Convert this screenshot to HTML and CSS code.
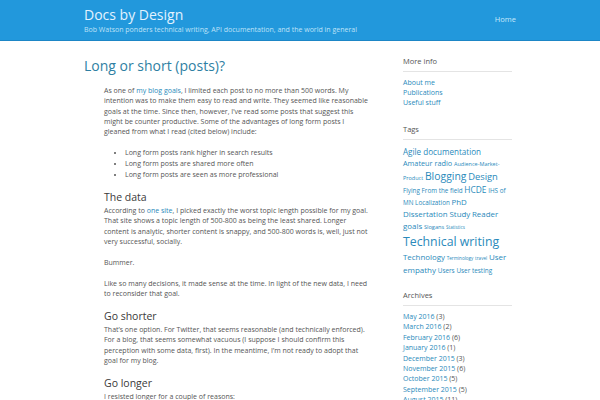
FILE: index.html
```html
<!DOCTYPE html>
<html>
<head>
<meta charset="utf-8">
<link rel="stylesheet" href="styles.css">
</head>
<body>
<header class="masthead">
  <div class="wrap head-inner">
    <div class="brand">
      <div class="site-title">Docs by Design</div>
      <div class="tagline">Bob Watson ponders technical writing, API documentation, and the world in general</div>
    </div>
    <nav class="nav"><a href="#">Home</a></nav>
  </div>
</header>
<div class="wrap page">
  <main class="main">
    <h1 class="entry-title">Long or short (posts)?</h1>
    <div class="entry">
      <p>As one of <a href="#">my blog goals</a>, I limited each post to no more than 500 words. My intention was to make them easy to read and write. They seemed like reasonable goals at the time. Since then, however, I’ve read some posts that suggest this might be counter productive. Some of the advantages of long form posts I gleaned from what I read (cited below) include:</p>
      <ul>
        <li>Long form posts rank higher in search results</li>
        <li>Long form posts are shared more often</li>
        <li>Long form posts are seen as more professional</li>
      </ul>
      <h2>The data</h2>
      <p>According to <a href="#">one site</a>, I picked exactly the worst topic length possible for my goal. That site shows a topic length of 500-800 as being the least shared. Longer content is analytic, shorter content is snappy, and 500-800 words is, well, just not very successful, socially.</p>
      <p>Bummer.</p>
      <p>Like so many decisions, it made sense at the time. In light of the new data, I need to reconsider that goal.</p>
      <h2>Go shorter</h2>
      <p>That’s one option. For Twitter, that seems reasonable (and technically enforced). For a blog, that seems somewhat vacuous (I suppose I should confirm this perception with some data, first). In the meantime, I’m not ready to adopt that goal for my blog.</p>
      <h2>Go longer</h2>
      <p>I resisted longer for a couple of reasons:</p>
    </div>
  </main>
  <aside class="sidebar">
    <section class="widget">
      <h3 class="widget-title">More info</h3>
      <ul class="links">
        <li><a href="#">About me</a></li>
        <li><a href="#">Publications</a></li>
        <li><a href="#">Useful stuff</a></li>
      </ul>
    </section>
    <section class="widget">
      <h3 class="widget-title">Tags</h3>
      <div class="tagcloud">
        <a class="s81" href="#">Agile documentation</a>
        <a class="s73" href="#">Amateur radio</a>
        <a class="s55" href="#">Audience-Market-Product</a>
        <a class="s104" href="#">Blogging</a>
        <a class="s94" href="#">Design</a>
        <a class="s63" href="#">Flying</a>
        <a class="s63" href="#">From the field</a>
        <a class="s84" href="#">HCDE</a>
        <a class="s63" href="#">IHS of MN</a>
        <a class="s63" href="#">Localization</a>
        <a class="s79" href="#">PhD Dissertation Study</a>
        <a class="s79" href="#">Reader goals</a>
        <a class="s57" href="#">Slogans</a>
        <a class="s46" href="#">Statistics</a>
        <a class="s123" href="#">Technical writing</a>
        <a class="s79" href="#">Technology</a>
        <a class="s46" href="#">Terminology</a>
        <a class="s46" href="#">travel</a>
        <a class="s80" href="#">User empathy</a>
        <a class="s64" href="#">Users</a>
        <a class="s64" href="#">User testing</a>
      </div>
    </section>
    <section class="widget">
      <h3 class="widget-title">Archives</h3>
      <ul class="links">
        <li><a href="#">May 2016</a> (3)</li>
        <li><a href="#">March 2016</a> (2)</li>
        <li><a href="#">February 2016</a> (6)</li>
        <li><a href="#">January 2016</a> (1)</li>
        <li><a href="#">December 2015</a> (3)</li>
        <li><a href="#">November 2015</a> (6)</li>
        <li><a href="#">October 2015</a> (5)</li>
        <li><a href="#">September 2015</a> (5)</li>
        <li><a href="#">August 2015</a> (11)</li>
      </ul>
    </section>
  </aside>
</div>
</body>
</html>
```
FILE: styles.css
```css
html, body { margin: 0; padding: 0; }
body {
  font-family: "Open Sans", "DejaVu Sans", sans-serif;
  color: #555;
  background: #fff;
  font-size: 7px;
  line-height: 10.4px;
}
a { color: #2a8abb; text-decoration: none; }
.wrap { width: 432px; margin: 0 auto; }
.masthead {
  background: #2298dc;
  border-bottom: 1px solid #1d86c6;
  height: 40px;
}
.head-inner { display: flex; justify-content: space-between; align-items: flex-start; }
.brand { padding-top: 5.5px; }
.site-title { color: #e2f3ff; font-size: 14px; line-height: 17px; }
.tagline { color: #bfe2f8; font-size: 7px; line-height: 9px; margin-top: 2.5px; }
.nav { padding-top: 14px; }
.nav a { color: #c9e8fb; font-size: 7.5px; line-height: 10px; }
.page { display: flex; align-items: flex-start; }
.main { width: 300px; flex: none; }
.entry-title {
  font-weight: normal; font-size: 14px; line-height: 18px; color: #2f7fa3;
  margin: 15.5px 0 11.3px;
}
.entry { padding-left: 20px; width: 265px; }
.entry p { margin: 0 0 10.4px; }
.entry ul { margin: 0 0 10.4px; padding-left: 21px; }
.entry li { line-height: 10.7px; }
.entry h2 { font-weight: normal; font-size: 10.5px; line-height: 13px; color: #3a3a3a; margin: 10.5px 0 2px; }
.sidebar { width: 109px; flex: none; margin-left: 19px; padding-top: 15px; }
.widget { margin-bottom: 15.5px; }
.widget-title {
  font-weight: normal; font-size: 7.5px; color: #555; margin: 0 0 5.5px;
  padding-bottom: 5px; border-bottom: 1px solid #e4e4e4; line-height: 10px;
}
.links { list-style: none; margin: 0; padding: 0; line-height: 10.4px; }
.tagcloud { font-size: 6.5px; line-height: 1.5; margin-bottom: -1px; }
.tagcloud a { line-height: 1.5; }
.s46 { font-size: 4.6px; }
.s55 { font-size: 5.5px; }
.s57 { font-size: 5.7px; }
.s63 { font-size: 6.3px; }
.s64 { font-size: 6.4px; }
.s73 { font-size: 7.3px; }
.s79 { font-size: 7.9px; }
.s80 { font-size: 8px; }
.s81 { font-size: 8.1px; }
.s84 { font-size: 8.4px; }
.s94 { font-size: 9.4px; }
.s104 { font-size: 10.4px; }
.s123 { font-size: 12.3px; }
```
